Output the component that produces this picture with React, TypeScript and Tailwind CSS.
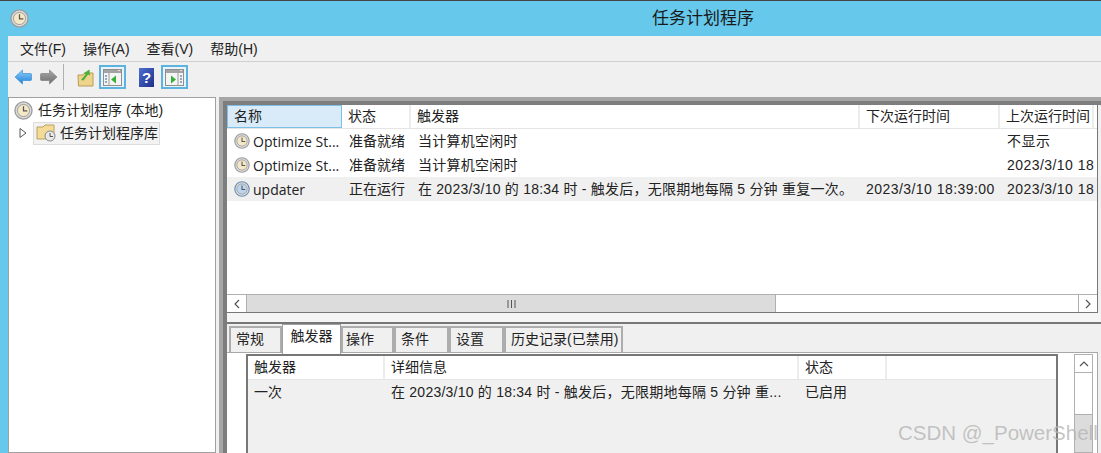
const ui = '"Liberation Sans", "Noto Sans CJK SC", sans-serif';

const Clock = ({ size = 18, tint = "#f5e8c6", ring = "#9b9b9b" }: { size?: number; tint?: string; ring?: string }) => (
  <svg width={size} height={size} viewBox="0 0 20 20" className="shrink-0">
    <circle cx="10" cy="10" r="9" fill="#dcdcdc" stroke={ring} strokeWidth="1.4" />
    <circle cx="10" cy="10" r="6.4" fill={tint} stroke="#8a8a8a" strokeWidth="0.8" />
    <path d="M10 5.5V10.5H14" fill="none" stroke="#555" strokeWidth="1.3" />
  </svg>
);

const PaneIcon = ({ right }: { right?: boolean }) => (
  <svg width="19" height="17" viewBox="0 0 19 17">
    <rect x="0.5" y="0.5" width="18" height="16" fill="#f4f4f4" stroke="#8f8f8f" />
    <rect x="1" y="1" width="17" height="3" fill="#a3a3a3" />
    <path d="M15 1.5H17" stroke="#e8e8e8" />
    {right ? (
      <>
        <path d="M13 4V17" stroke="#9a9a9a" />
        <path d="M15 7H17M15 10H17M15 13H17" stroke="#6f8fb0" strokeWidth="1.4" />
        <path d="M6 6.5L11 10.5L6 14.5Z" fill="#35b035" />
      </>
    ) : (
      <>
        <path d="M6 4V17" stroke="#9a9a9a" />
        <path d="M2 7H4M2 10H4M2 13H4" stroke="#6f8fb0" strokeWidth="1.4" />
        <path d="M13 6.5L8 10.5L13 14.5Z" fill="#35b035" />
      </>
    )}
  </svg>
);

const ToggleBtn = ({ right, className }: { right?: boolean; className: string }) => (
  <div className={`flex h-[24px] w-[27px] shrink-0 items-center justify-center border-2 border-[#5cb3e0] bg-[#e8f3fa] ${className}`}>
    <PaneIcon right={right} />
  </div>
);

const rows = [
  { name: "Optimize St...", state: "准备就绪", trigger: "当计算机空闲时", next: "", last: "不显示" },
  { name: "Optimize St...", state: "准备就绪", trigger: "当计算机空闲时", next: "", last: "2023/3/10 18:39" },
  { name: "updater", state: "正在运行", trigger: "在 2023/3/10 的 18:34 时 - 触发后，无限期地每隔 5 分钟 重复一次。", next: "2023/3/10 18:39:00", last: "2023/3/10 18:34", active: true },
];

const columns = [
  { label: "名称", w: "w-[115px]" },
  { label: "状态", w: "w-[69px]" },
  { label: "触发器", w: "w-[449px]" },
  { label: "下次运行时间", w: "w-[140px]" },
  { label: "上次运行时间", w: "w-[94px]" },
];

const tabs = [
  { label: "常规", w: "w-[53px]" },
  { label: "触发器", w: "w-[59px]" },
  { label: "操作", w: "w-[53px]" },
  { label: "条件", w: "w-[55px]" },
  { label: "设置", w: "w-[55px]" },
  { label: "历史记录(已禁用)", w: "w-[119px]" },
];

export default function App() {
  return (
    <div className="relative flex h-[453px] w-[1101px] flex-col overflow-hidden bg-[#66c9ec] text-[14px] text-[#222]" style={{ fontFamily: ui }}>
      <div className="h-px bg-[#444]" />
      {/* title bar */}
      <div className="relative flex h-[35px] shrink-0 items-center pl-[10px]">
        <Clock size={19} />
        <div className="absolute left-[652px] top-[6px] text-[17px] leading-6 text-[#1a1a1a]">任务计划程序</div>
      </div>

      <div className="ml-[8px] flex min-h-0 flex-1 flex-col bg-[#f0f0f0]">
        {/* menu */}
        <div className="flex h-[26px] shrink-0 items-center gap-[17px] border-b border-[#cfcfcf] pl-[12px] leading-none">
          <span>文件(F)</span>
          <span>操作(A)</span>
          <span>查看(V)</span>
          <span>帮助(H)</span>
        </div>

        {/* toolbar */}
        <div className="flex h-[35px] shrink-0 items-center pb-[5px] pl-[6px]">
          <svg width="18" height="18" viewBox="0 0 18 18" className="shrink-0">
            <defs>
              <linearGradient id="backFill" x1="0" y1="0" x2="0" y2="1">
                <stop offset="0" stopColor="#8fd0f8" />
                <stop offset="1" stopColor="#1f7fd8" />
              </linearGradient>
              <linearGradient id="fwdFill" x1="0" y1="0" x2="0" y2="1">
                <stop offset="0" stopColor="#a8a8a8" />
                <stop offset="1" stopColor="#6e6e6e" />
              </linearGradient>
            </defs>
            <path d="M1 9L8.5 2V5.5H16.5Q17.5 5.5 17.5 6.5V11.5Q17.5 12.5 16.5 12.5H8.5V16Z" fill="url(#backFill)" stroke="#2a86d0" strokeWidth="0.6" />
          </svg>
          <svg width="18" height="18" viewBox="0 0 18 18" className="ml-[8px] shrink-0">
            <path d="M17 9L9.5 2V5.5H1.5Q0.5 5.5 0.5 6.5V11.5Q0.5 12.5 1.5 12.5H9.5V16Z" fill="url(#fwdFill)" stroke="#777" strokeWidth="0.6" />
          </svg>
          <div className="ml-[5px] h-[26px] w-px shrink-0 bg-[#b0b0b0]" />
          <svg width="17" height="19" viewBox="0 0 17 19" className="ml-[13px] shrink-0">
            <path d="M1 7H6L7.5 5H16V18H1.5Z" fill="#eed48a" stroke="#b89c55" />
            <path d="M4 12L8.5 6.5L7 5L12.5 1.5L13 7.5L11 6.5L6.5 12.5Z" fill="#4caf3a" />
          </svg>
          <ToggleBtn className="ml-[5px]" />
          <div className="ml-[13px] flex h-[19px] w-[15px] shrink-0 items-center justify-center bg-gradient-to-br from-[#4f6fd0] to-[#1f2f8a] text-[15px] font-bold leading-none text-white">?</div>
          <ToggleBtn right className="ml-[7px]" />
        </div>

        <div className="flex min-h-0 flex-1">
          {/* tree */}
          <div className="h-full w-[208px] shrink-0 border border-[#a0a0a0] bg-white">
            <div className="flex h-[23px] items-center gap-[5px] pl-[5px] pt-[1px]">
              <Clock size={19} />
              <span className="whitespace-nowrap">任务计划程序 (本地)</span>
            </div>
            <div className="flex h-[24px] items-center">
              <svg width="10" height="12" viewBox="0 0 10 12" className="ml-[9px] mr-[5px] shrink-0">
                <path d="M2 1.5L8 6L2 10.5Z" fill="#fff" stroke="#555" />
              </svg>
              <div className="flex h-[23px] w-[127px] items-center gap-[3px] border border-[#dcdcdc] bg-[#f2f2f2] pl-[2px]">
                <svg width="21" height="20" viewBox="0 0 21 20" className="shrink-0">
                  <path d="M1 4H7L9 2H18V16H1Z" fill="#f4dc98" stroke="#b8a160" />
                  <circle cx="14" cy="13" r="5" fill="#e9e9e9" stroke="#888" />
                  <path d="M14 10V13.5H17" fill="none" stroke="#555" />
                </svg>
                <span className="whitespace-nowrap">任务计划程序库</span>
              </div>
            </div>
          </div>

          {/* right side with its striped splitter edge */}
          <div className="ml-[3px] flex min-w-0 flex-1 flex-col border-l-[4px] border-t-[4px] border-[#a6a6a6]">
            <div className="flex min-h-0 flex-1 flex-col border-l-[4px] border-t-[4px] border-[#7d7d7d] bg-[#f0f0f0]">
              {/* task list */}
              <div className="mr-[3px] flex h-[208px] shrink-0 flex-col border-b border-r border-[#777] bg-white">
                <div className="flex h-[24px] shrink-0 overflow-hidden border-b border-[#e5e5e5]">
                  {columns.map((c, i) => (
                    <div key={c.label} className={`${c.w} flex shrink-0 items-center pl-[6px] ${i === 0 ? "border border-[#7cc0e8] bg-[#d9ebf9]" : "border-r-2 border-[#ececec]"}`}>
                      {c.label}
                    </div>
                  ))}
                </div>
                {rows.map((r) => (
                  <div key={r.state + r.last} className={`flex h-[24px] shrink-0 items-center overflow-hidden whitespace-nowrap ${r.active ? "bg-[#f0f0f0]" : ""}`}>
                    <div className="flex w-[115px] shrink-0 items-center gap-[3px] pl-[7px]">
                      <Clock size={16} tint={r.active ? "#bcd6f0" : "#f5e8c6"} ring={r.active ? "#6a8fb5" : "#9b9b9b"} />
                      <span style={{ fontFamily: '"Open Sans", sans-serif' }}>{r.name}</span>
                    </div>
                    <div className="w-[69px] shrink-0 pl-[7px]">{r.state}</div>
                    <div className="w-[449px] shrink-0 pl-[7px] tracking-[0.23px]">{r.trigger}</div>
                    <div className="w-[140px] shrink-0 pl-[6px] tracking-[0.45px]">{r.next}</div>
                    <div className="w-[94px] shrink-0 overflow-hidden pl-[7px] tracking-[0.45px]">{r.last}</div>
                  </div>
                ))}
                <div className="flex-1" />
                {/* horizontal scrollbar */}
                <div className="flex h-[18px] shrink-0 border-t border-[#b0b0b0] bg-white">
                  <div className="flex w-[20px] items-center justify-center border-r border-[#b0b0b0]">
                    <svg width="8" height="10" viewBox="0 0 8 10"><path d="M6 1L2 5L6 9" fill="none" stroke="#555" strokeWidth="1.2" /></svg>
                  </div>
                  <div className="flex w-[529px] items-center justify-center border-r border-[#b0b0b0] bg-[#dcdcdc]">
                    <svg width="9" height="8" viewBox="0 0 9 8"><path d="M1 0V8M4.5 0V8M8 0V8" stroke="#555" /></svg>
                  </div>
                  <div className="flex-1" />
                  <div className="flex w-[19px] items-center justify-center border-l border-[#b0b0b0]">
                    <svg width="8" height="10" viewBox="0 0 8 10"><path d="M2 1L6 5L2 9" fill="none" stroke="#555" strokeWidth="1.2" /></svg>
                  </div>
                </div>
              </div>

              <div className="h-[9px] shrink-0 bg-[#f5f5f5]" />

              {/* details */}
              <div className="flex min-h-0 flex-1 flex-col border-t-2 border-[#777] bg-[#f0f0f0]">
                <div className="flex h-[28px] shrink-0 items-end pl-[2px]">
                  {tabs.map((t, i) =>
                    i === 1 ? (
                      <div key={t.label} className={`${t.w} z-10 -mb-[2px] flex h-[30px] shrink-0 items-center justify-center border border-b-0 border-[#a0a0a0] bg-white pb-[7px]`}>
                        {t.label}
                      </div>
                    ) : (
                      <div key={t.label} className={`${t.w} flex h-[26px] shrink-0 items-center whitespace-nowrap border-2 border-b-0 border-[#adadad] bg-[#f0f0f0] pb-[2px] ${i === 2 ? "pl-[3px]" : "pl-[5px]"}`}>
                        {t.label}
                      </div>
                    ),
                  )}
                </div>
                <div className="mr-[3px] flex min-h-0 flex-1 border-r border-t border-[#a8a8a8] bg-white pl-[19px] pt-[1px]">
                  <div className="w-[812px] shrink-0 border-x-2 border-t-2 border-[#777] bg-[#f0f0f0]">
                    <div className="flex h-[24px] border-b border-[#e5e5e5] bg-white">
                      <div className="flex w-[137px] shrink-0 items-center border-r-2 border-[#ececec] pl-[6px]">触发器</div>
                      <div className="flex w-[414px] shrink-0 items-center border-r-2 border-[#ececec] pl-[6px]">详细信息</div>
                      <div className="flex w-[88px] shrink-0 items-center border-r-2 border-[#ececec] pl-[6px]">状态</div>
                    </div>
                    <div className="flex h-[24px] items-center whitespace-nowrap">
                      <div className="w-[137px] shrink-0 pl-[6px]">一次</div>
                      <div className="w-[414px] shrink-0 pl-[6px] tracking-[0.23px]">在 2023/3/10 的 18:34 时 - 触发后，无限期地每隔 5 分钟 重...</div>
                      <div className="w-[88px] shrink-0 pl-[6px]">已启用</div>
                    </div>
                  </div>
                  <div className="ml-[16px] flex w-[19px] shrink-0 flex-col border border-[#b0b0b0] bg-white">
                    <div className="flex h-[18px] shrink-0 items-center justify-center border-b border-[#b0b0b0]">
                      <svg width="10" height="8" viewBox="0 0 10 8"><path d="M1 6L5 2L9 6" fill="none" stroke="#555" strokeWidth="1.2" /></svg>
                    </div>
                    <div className="h-[41px] shrink-0" />
                    <div className="flex-1 border-t border-[#b0b0b0] bg-[#dcdcdc]" />
                  </div>
                </div>
              </div>
            </div>
          </div>
        </div>
      </div>

      {/* watermark */}
      <div className="absolute left-[898px] top-[421px] whitespace-nowrap text-[20.5px] leading-6 text-[#b5b5b5]/80">
        CSDN @_PowerShell
      </div>
    </div>
  );
}
